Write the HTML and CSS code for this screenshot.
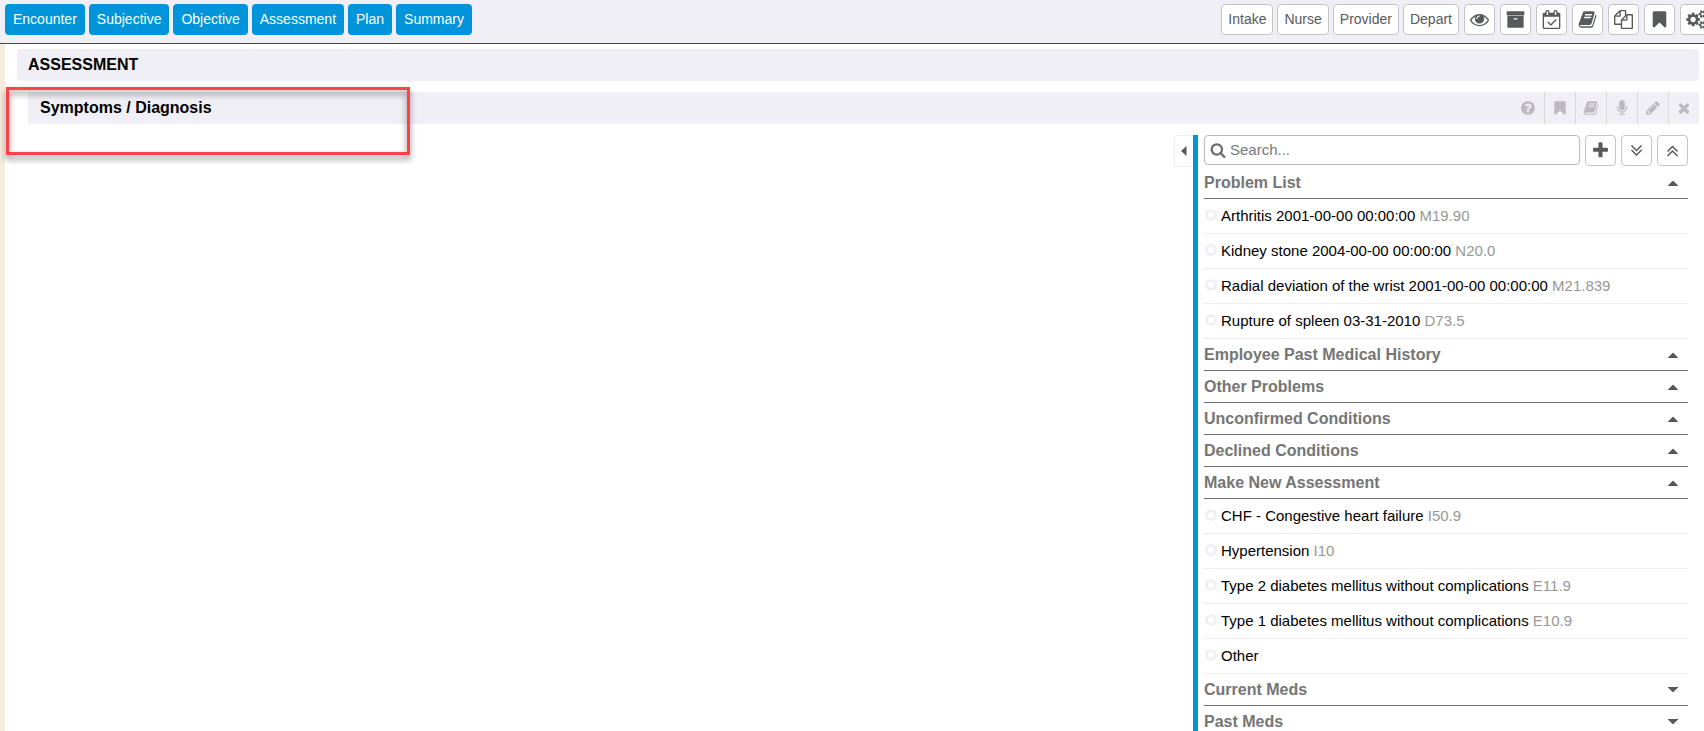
FILE: index.html
```html
<!DOCTYPE html>
<html lang="en">
<head>
<meta charset="utf-8">
<title>Assessment</title>
<link rel="stylesheet" href="styles.css">
</head>
<body>
<svg class="sprite" aria-hidden="true">
  <symbol id="eye" viewBox="0 0 1792 1792"><path d="M1664 960q-152-236-381-353 61 104 61 225 0 185-131.500 316.500t-316.500 131.500-316.500-131.500-131.500-316.500q0-121 61-225-229 117-381 353 133 205 333.500 326.500t434.500 121.500 434.500-121.500 333.500-326.500zm-720-384q0-20-14-34t-34-14q-125 0-214.500 89.500t-89.500 214.500q0 20 14 34t34 14 34-14 14-34q0-86 61-147t147-61q20 0 34-14t14-34zm848 384q0 34-20 69-140 230-376.500 368.500t-499.500 138.500-499.500-139-376.500-368q-20-35-20-69t20-69q140-229 376.500-368t499.500-139 499.500 139 376.500 368q20 35 20 69z"/></symbol>
  <symbol id="archive" viewBox="0 0 1792 1792"><path d="M1088 832q0-26-19-45t-45-19h-256q-26 0-45 19t-19 45 19 45 45 19h256q26 0 45-19t19-45zm576-192v960q0 26-19 45t-45 19h-1408q-26 0-45-19t-19-45v-960q0-26 19-45t45-19h1408q26 0 45 19t19 45zm64-448v256q0 26-19 45t-45 19h-1536q-26 0-45-19t-19-45v-256q0-26 19-45t45-19h1536q26 0 45 19t19 45z"/></symbol>
  <symbol id="calendar" viewBox="-64 0 1792 1792"><path d="M1303 964l-512 512q-10 9-23 9t-23-9l-288-288q-9-10-9-23t9-22l46-46q9-9 22-9t23 9l220 220 444-444q10-9 23-9t22 9l46 46q9 9 9 22t-9 23zm-1175 700h1408v-1024h-1408v1024zm384-1216v-288q0-14-9-23t-23-9h-64q-14 0-23 9t-9 23v288q0 14 9 23t23 9h64q14 0 23-9t9-23zm768 0v-288q0-14-9-23t-23-9h-64q-14 0-23 9t-9 23v288q0 14 9 23t23 9h64q14 0 23-9t9-23zm384-64v1280q0 52-38 90t-90 38h-1408q-52 0-90-38t-38-90v-1280q0-52 38-90t90-38h128v-96q0-66 47-113t113-47h64q66 0 113 47t47 113v96h384v-96q0-66 47-113t113-47h64q66 0 113 47t47 113v96h128q52 0 90 38t38 90z"/></symbol>
  <symbol id="book" viewBox="0 0 1792 1792"><path d="M1703 478q40 57 18 129l-275 906q-19 64-76.500 107.500t-122.500 43.500h-923q-77 0-148.500-53.500t-99.500-131.500q-24-67-2-127 0-4 3-27t4-37q1-8-3-21.500t-3-19.500q2-11 8-21t16.500-23.500 16.500-23.500q23-38 45-91.500t30-91.500q3-10 .5-30t-.5-28q3-11 17-28t17-23q21-36 42-92t25-90q1-9-2.500-32t.5-28q4-13 22-30.500t22-22.500q19-26 42.500-84.500t27.500-96.500q1-8-3-25.500t-2-26.500q2-8 9-18t18-23 17-21q8-12 16.500-30.500t15-35 16-36 19.500-32 26.500-23.500 36-11.500 47.500 5.500l-1 3q38-9 51-9h761q74 0 114 56t18 130l-274 906q-36 119-71.500 153.500t-128.500 34.500h-869q-27 0-38 15-11 16-1 43 24 70 144 70h923q29 0 56-15.500t35-41.500l300-987q7-22 5-57 38 15 59 43zm-1064 2q-4 13 2 22.500t20 9.500h608q13 0 25.500-9.500t16.500-22.500l21-64q4-13-2-22.500t-20-9.500h-608q-13 0-25.500 9.500t-16.500 22.500zm-83 256q-4 13 2 22.500t20 9.500h608q13 0 25.500-9.500t16.500-22.500l21-64q4-13-2-22.500t-20-9.500h-608q-13 0-25.500 9.500t-16.500 22.500z"/></symbol>
  <symbol id="files" viewBox="0 0 1792 1792"><path d="M1696 384q40 0 68 28t28 68v1216q0 40-28 68t-68 28h-960q-40 0-68-28t-28-68v-288h-544q-40 0-68-28t-28-68v-672q0-40 20-88t48-76l408-408q28-28 76-48t88-20h416q40 0 68 28t28 68v328q68-40 128-40h416zm-544 213l-299 299h299v-299zm-640-384l-299 299h299v-299zm196 647l316-316v-416h-384v416q0 40-28 68t-68 28h-416v640h512v-256q0-40 20-88t48-76zm956 804v-1152h-384v416q0 40-28 68t-68 28h-416v640h896z"/></symbol>
  <symbol id="bookmark" viewBox="0 0 1792 1792"><path d="M1420 128q23 0 44 9 33 13 52.500 41t19.500 62v1289q0 34-19.500 62t-52.500 41q-19 8-44 8-48 0-83-32l-441-424-441 424q-36 33-83 33-23 0-44-9-33-13-52.500-41t-19.500-62v-1289q0-34 19.500-62t52.500-41q21-9 44-9h1048z"/></symbol>
  <symbol id="cogs" viewBox="0 0 1920 1792"><path d="M896 896q0-106-75-181t-181-75-181 75-75 181 75 181 181 75 181-75 75-181zm768 512q0-52-38-90t-90-38-90 38-38 90q0 53 37.500 90.500t90.500 37.500 90.500-37.500 37.500-90.500zm0-1024q0-52-38-90t-90-38-90 38-38 90q0 53 37.500 90.500t90.500 37.500 90.500-37.500 37.500-90.500zm-384 421v185q0 10-7 19.500t-16 10.500l-155 24q-11 35-32 76 34 48 90 115 7 11 7 20 0 12-7 19-23 30-82.500 89.500t-78.500 59.500q-11 0-21-7l-115-90q-37 19-77 31-11 108-23 155-7 24-30 24h-186q-11 0-20-7.500t-10-17.500l-23-153q-34-10-75-31l-118 89q-7 7-20 7-11 0-21-8-144-133-144-160 0-9 7-19 10-14 41-53t47-61q-23-44-35-82l-152-24q-10-1-17-9.500t-7-19.500v-185q0-10 7-19.500t16-10.500l155-24q11-35 32-76-34-48-90-115-7-11-7-20 0-12 7-20 22-30 82-89t79-59q11 0 21 7l115 90q34-18 77-32 11-108 23-154 7-24 30-24h186q11 0 20 7.500t10 17.500l23 153q34 10 75 31l118-89q8-7 20-7 11 0 21 8 144 133 144 160 0 8-7 19-12 16-42 54t-45 60q23 48 34 82l152 23q10 2 17 10.500t7 19.500zm640 533v140q0 16-149 31-12 27-30 52 51 113 51 138 0 4-4 7-122 71-124 71-8 0-46-47t-52-68q-20 2-30 2t-30-2q-14 21-52 68t-46 47q-2 0-124-71-4-3-4-7 0-25 51-138-18-25-30-52-149-15-149-31v-140q0-16 149-31 13-29 30-52-51-113-51-138 0-4 4-7 4-2 35-20t59-34 30-16q8 0 46 46.500t52 67.500q20-2 30-2t30 2q51-71 92-112l6-2q4 0 124 70 4 3 4 7 0 25-51 138 17 23 30 52 149 15 149 31zm0-1024v140q0 16-149 31-12 27-30 52 51 113 51 138 0 4-4 7-122 71-124 71-8 0-46-47t-52-68q-20 2-30 2t-30-2q-14 21-52 68t-46 47q-2 0-124-71-4-3-4-7 0-25 51-138-18-25-30-52-149-15-149-31v-140q0-16 149-31 13-29 30-52-51-113-51-138 0-4 4-7 4-2 35-20t59-34 30-16q8 0 46 46.500t52 67.500q20-2 30-2t30 2q51-71 92-112l6-2q4 0 124 70 4 3 4 7 0 25-51 138 17 23 30 52 149 15 149 31z"/></symbol>
  <symbol id="question" viewBox="0 0 1792 1792"><path d="M1024 1376v-192q0-14-9-23t-23-9h-192q-14 0-23 9t-9 23v192q0 14 9 23t23 9h192q14 0 23-9t9-23zm256-672q0-88-55.500-163t-138.500-116-170-41q-243 0-371 213-15 24 8 42l132 100q7 6 19 6 16 0 25-12 53-68 86-92 34-24 86-24 48 0 85.500 26t37.500 59q0 38-20 61t-68 45q-63 28-115.500 86.500t-52.500 125.500v36q0 14 9 23t23 9h192q14 0 23-9t9-23q0-19 21.500-49.500t54.500-49.500q32-18 49-28.500t46-35 44.500-48 28-60.500 12.500-81zm384 192q0 209-103 385.500t-279.500 279.500-385.500 103-385.500-103-279.500-279.500-103-385.500 103-385.500 279.500-279.500 385.500-103 385.500 103 279.500 279.500 103 385.500z"/></symbol>
  <symbol id="mic" viewBox="0 0 1792 1792"><path d="M1472 704v128q0 221-147.500 384.500t-364.500 187.500v132h256q26 0 45 19t19 45-19 45-45 19h-640q-26 0-45-19t-19-45 19-45 45-19h256v-132q-217-24-364.500-187.500t-147.500-384.500v-128q0-26 19-45t45-19 45 19 19 45v128q0 185 131.500 316.500t316.500 131.500 316.500-131.500 131.500-316.500v-128q0-26 19-45t45-19 45 19 19 45zm-256-384v512q0 132-94 226t-226 94-226-94-94-226v-512q0-132 94-226t226-94 226 94 94 226z"/></symbol>
  <symbol id="pencil" viewBox="0 0 1792 1792"><path d="M491 1536l91-91-235-235-91 91v107h128v128h107zm523-928q0-22-22-22-10 0-17 7l-542 542q-7 7-7 17 0 22 22 22 10 0 17-7l542-542q7-7 7-17zm-54-192l416 416-832 832h-416v-416zm683 96q0 53-37 90l-166 166-416-416 166-165q36-38 90-38 53 0 91 38l235 234q37 39 37 91z"/></symbol>
  <symbol id="times" viewBox="0 0 1792 1792"><path d="M1490 1322q0 40-28 68l-136 136q-28 28-68 28t-68-28l-294-294-294 294q-28 28-68 28t-68-28l-136-136q-28-28-28-68t28-68l294-294-294-294q-28-28-28-68t28-68l136-136q28-28 68-28t68 28l294 294 294-294q28-28 68-28t68 28l136 136q28 28 28 68t-28 68l-294 294 294 294q28 28 28 68z"/></symbol>
  <symbol id="plus" viewBox="0 0 1792 1792"><path d="M1600 736v192q0 40-28 68t-68 28h-416v416q0 40-28 68t-68 28h-192q-40 0-68-28t-28-68v-416h-416q-40 0-68-28t-28-68v-192q0-40 28-68t68-28h416v-416q0-40 28-68t68-28h192q40 0 68 28t28 68v416h416q40 0 68 28t28 68z"/></symbol>
  <symbol id="search" viewBox="0 0 1792 1792"><path d="M1216 832q0-185-131.500-316.500t-316.500-131.500-316.500 131.500-131.500 316.500 131.500 316.500 316.500 131.500 316.500-131.500 131.500-316.500zm512 832q0 52-38 90t-90 38q-54 0-90-38l-343-342q-179 124-399 124-143 0-273.500-55.500t-225-150-150-225-55.500-273.500 55.500-273.500 150-225 225-150 273.500-55.500 273.500 55.500 225 150 150 225 55.500 273.500q0 220-124 399l343 343q37 37 37 90z"/></symbol>
  <symbol id="expand" viewBox="0 0 19 19"><path fill="none" stroke="currentColor" stroke-width="1.500" d="M4.500 4.500l5 5 5-5M4.500 9l5 5 5-5"/></symbol>
  <symbol id="collapse" viewBox="0 0 19 19"><path fill="none" stroke="currentColor" stroke-width="1.500" d="M4.500 10.500l5-5 5 5M4.500 15l5-5 5 5"/></symbol>
  <symbol id="up" viewBox="0 0 10 6"><path d="M0 5.500L4.500 1h1L10 5.500V6H0z"/></symbol>
  <symbol id="down" viewBox="0 0 10 6"><path d="M0 .5L4.500 5h1L10 .5V0H0z"/></symbol>
  <symbol id="left" viewBox="0 0 6 10"><path d="M5.500 0L0 5l5.500 5z"/></symbol>
</svg>

<header class="topbar">
  <nav class="tabs" aria-label="Note sections">
    <button class="tab">Encounter</button>
    <button class="tab">Subjective</button>
    <button class="tab">Objective</button>
    <button class="tab">Assessment</button>
    <button class="tab">Plan</button>
    <button class="tab">Summary</button>
  </nav>
  <div class="tools">
    <div class="stages">
      <button class="tool">Intake</button>
      <button class="tool">Nurse</button>
      <button class="tool">Provider</button>
      <button class="tool">Depart</button>
    </div>
    <button class="tool tool-icon" aria-label="View"><svg class="icon"><use href="#eye"/></svg></button>
    <button class="tool tool-icon" aria-label="Archive"><svg class="icon"><use href="#archive"/></svg></button>
    <button class="tool tool-icon" aria-label="Schedule"><svg class="icon"><use href="#calendar"/></svg></button>
    <button class="tool tool-icon" aria-label="Reference"><svg class="icon"><use href="#book"/></svg></button>
    <button class="tool tool-icon" aria-label="Copy"><svg class="icon"><use href="#files"/></svg></button>
    <button class="tool tool-icon" aria-label="Bookmark"><svg class="icon"><use href="#bookmark"/></svg></button>
    <button class="tool tool-icon" aria-label="Settings"><svg class="icon icon-wide"><use href="#cogs"/></svg></button>
  </div>
</header>

<main class="page">
  <h1 class="bar">ASSESSMENT</h1>
  <div class="bar bar-sub">
    <h2 class="bar-title">Symptoms / Diagnosis</h2>
    <div class="bar-tools">
      <button class="bar-tool" aria-label="Help"><svg class="icon-sm"><use href="#question"/></svg></button>
      <button class="bar-tool" aria-label="Bookmark"><svg class="icon-sm"><use href="#bookmark"/></svg></button>
      <button class="bar-tool" aria-label="Reference"><svg class="icon-sm"><use href="#book"/></svg></button>
      <button class="bar-tool" aria-label="Dictate"><svg class="icon-sm"><use href="#mic"/></svg></button>
      <button class="bar-tool" aria-label="Edit"><svg class="icon-sm"><use href="#pencil"/></svg></button>
      <button class="bar-tool" aria-label="Close"><svg class="icon-sm"><use href="#times"/></svg></button>
    </div>
  </div>
  <div class="highlight"></div>

  <div class="workspace">
    <button class="toggle" aria-label="Toggle panel"><svg class="caret-left"><use href="#left"/></svg></button>
    <aside class="panel">
      <div class="search-row">
        <label class="search">
          <svg class="icon-sm"><use href="#search"/></svg>
          <input class="search-input" type="text" placeholder="Search..." aria-label="Search">
        </label>
        <button class="tool tool-icon" aria-label="Add"><svg class="icon"><use href="#plus"/></svg></button>
        <button class="tool tool-icon" aria-label="Expand all"><svg class="icon"><use href="#expand"/></svg></button>
        <button class="tool tool-icon" aria-label="Collapse all"><svg class="icon"><use href="#collapse"/></svg></button>
      </div>

      <button class="group">Problem List<svg class="caret"><use href="#up"/></svg></button>
      <label class="item"><input class="dot" type="radio" name="dx"><span>Arthritis 2001-00-00 00:00:00 <span class="code">M19.90</span></span></label>
      <label class="item"><input class="dot" type="radio" name="dx"><span>Kidney stone 2004-00-00 00:00:00 <span class="code">N20.0</span></span></label>
      <label class="item"><input class="dot" type="radio" name="dx"><span>Radial deviation of the wrist 2001-00-00 00:00:00 <span class="code">M21.839</span></span></label>
      <label class="item"><input class="dot" type="radio" name="dx"><span>Rupture of spleen 03-31-2010 <span class="code">D73.5</span></span></label>
      <button class="group">Employee Past Medical History<svg class="caret"><use href="#up"/></svg></button>
      <button class="group">Other Problems<svg class="caret"><use href="#up"/></svg></button>
      <button class="group">Unconfirmed Conditions<svg class="caret"><use href="#up"/></svg></button>
      <button class="group">Declined Conditions<svg class="caret"><use href="#up"/></svg></button>
      <button class="group">Make New Assessment<svg class="caret"><use href="#up"/></svg></button>
      <label class="item"><input class="dot" type="radio" name="dx"><span>CHF - Congestive heart failure <span class="code">I50.9</span></span></label>
      <label class="item"><input class="dot" type="radio" name="dx"><span>Hypertension <span class="code">I10</span></span></label>
      <label class="item"><input class="dot" type="radio" name="dx"><span>Type 2 diabetes mellitus without complications <span class="code">E11.9</span></span></label>
      <label class="item"><input class="dot" type="radio" name="dx"><span>Type 1 diabetes mellitus without complications <span class="code">E10.9</span></span></label>
      <label class="item"><input class="dot" type="radio" name="dx"><span>Other</span></label>
      <button class="group">Current Meds<svg class="caret"><use href="#down"/></svg></button>
      <button class="group">Past Meds<svg class="caret"><use href="#down"/></svg></button>
    </aside>
  </div>
</main>
</body>
</html>
```
FILE: styles.css
```css
* { box-sizing: border-box; }

body {
  margin: 0;
  height: 100vh;
  display: flex;
  flex-direction: column;
  overflow: hidden;
  background: #fff;
  color: #000;
  font-family: "Liberation Sans", Arial, sans-serif;
  font-size: 15px;
}

button, input { font: inherit; margin: 0; }
svg { display: block; fill: currentColor; flex: none; }
.sprite { position: absolute; width: 0; height: 0; }
.icon { width: 19px; height: 19px; }
.icon-wide { width: 21px; }
.icon-sm { width: 16px; height: 16px; }

.topbar {
  display: flex;
  justify-content: space-between;
  flex: none;
  padding: 4px 0 8px 5px;
  background: #f0eff5;
  border-bottom: 1px solid #444;
}
.tabs, .stages { display: flex; gap: 4px; }
.tools { display: flex; gap: 5px; margin-right: -9px; }

.tab, .tool {
  height: 31px;
  border-radius: 4px;
  font-size: 14px;
  line-height: 16px;
  padding: 0 8px 2px;
  white-space: nowrap;
}
.tab { border: 0; background: #0095da; color: #fff; }
.tool {
  flex: none;
  padding: 0 6px 2px;
  border: 1px solid #c4c4c8;
  background: #fff;
  color: #58595b;
}
.tool-icon { display: flex; align-items: center; padding: 0 5px; }

.page {
  position: relative;
  flex: 1;
  min-height: 0;
  display: flex;
  flex-direction: column;
  padding: 5px 5px 0 12px;
  border-left: 5px solid #f5ecdd;
}
.bar {
  flex: none;
  height: 32px;
  margin: 0 0 11px;
  padding: 0 11px;
  border-radius: 4px;
  background: #f0eff5;
  font-size: 16px;
  line-height: 32px;
}
.bar-sub {
  display: flex;
  justify-content: space-between;
  margin-left: 11px;
  padding: 0 0 0 12px;
}
.bar-title { margin: 0; font-size: 16px; line-height: 32px; }
.bar-tools { display: flex; }
.bar-tool {
  display: flex;
  align-items: center;
  justify-content: center;
  width: 31px;
  padding: 0 1px 1px 0;
  border: 0;
  border-left: 1px solid #d9d9dd;
  background: none;
  color: #bbb9bd;
}
.bar-tool:first-child { border-left: 0; }

.highlight {
  position: absolute;
  left: 1px;
  top: 43px;
  width: 404px;
  height: 68px;
  border: 3px solid #fb4249;
  filter: drop-shadow(0 4px 3px rgba(0, 0, 0, 0.5));
  pointer-events: none;
}

.workspace {
  flex: 1;
  min-height: 0;
  display: flex;
  justify-content: flex-end;
  padding-right: 11px;
}
.toggle {
  display: flex;
  align-items: center;
  width: 19px;
  height: 32px;
  padding: 0 6px;
  border: 1px solid #eeeef2;
  border-right: 0;
  border-radius: 4px 0 0 4px;
  background: #fff;
  color: #58595b;
}
.caret-left { width: 6px; height: 10px; }
.panel {
  flex: 0 1 495px;
  overflow: hidden;
  padding-left: 6px;
  border-left: 5px solid #0095da;
}

.search-row { display: flex; gap: 5px; height: 32px; }
.search {
  flex: 1;
  display: flex;
  align-items: center;
  gap: 4px;
  height: 30px;
  padding: 0 5px;
  border: 1px solid #b9b9bd;
  border-radius: 4px;
  color: #6d6e70;
}
.search-input {
  flex: 1;
  min-width: 0;
  padding: 0 0 1px;
  border: 0;
  outline: 0;
  background: none;
}
.search-input::placeholder { color: #77787a; }

.group {
  display: flex;
  align-items: center;
  justify-content: space-between;
  width: 100%;
  height: 32px;
  padding: 0 10px 0 0;
  border: 0;
  border-bottom: 1px solid #707173;
  background: none;
  color: #757575;
  font-size: 16px;
  font-weight: bold;
  text-align: left;
}
.caret { width: 10px; height: 6px; color: #58595b; }

.item {
  display: flex;
  align-items: center;
  gap: 4px;
  height: 35px;
  padding: 0 0 2px 1px;
  border-bottom: 1px solid #efeff1;
  white-space: nowrap;
}
.dot {
  appearance: none;
  width: 12px;
  height: 12px;
  border: 3px solid #f0eff5;
  border-radius: 50%;
}
.code { color: #979797; }
```
